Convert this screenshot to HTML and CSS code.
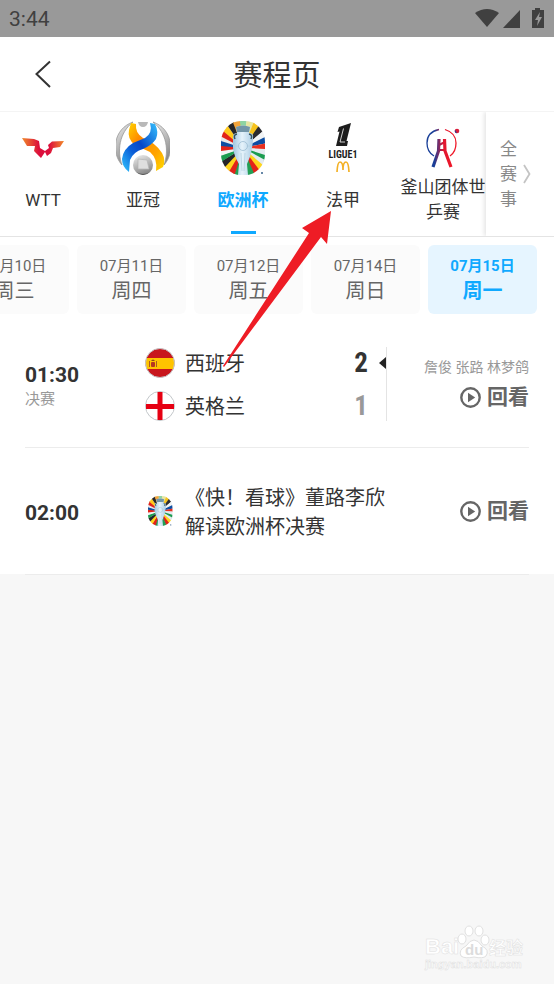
FILE: index.html
```
<!DOCTYPE html>
<html lang="zh-CN">
<head>
  <meta charset="UTF-8" />
  <meta name="viewport" content="width=device-width, initial-scale=1.0"/>
  <title>赛程页</title>
  <link rel="stylesheet" href="styles.css">
</head>
<body>

  <!-- Shared icons -->
  <svg class="sprite" aria-hidden="true">
    <defs>
      <path id="ray" d="M22 27L17.4 -8H26.6Z"/>
      <clipPath id="euroClip"><rect x="0" y="0" width="44" height="54" rx="20" ry="21"/></clipPath>
      <linearGradient id="cup" x1="0" x2="1">
        <stop offset="0" stop-color="#9fc6df"/>
        <stop offset="0.45" stop-color="#e6f3fb"/>
        <stop offset="1" stop-color="#a9cce4"/>
      </linearGradient>
    </defs>
    <symbol id="euro" viewBox="0 0 45 54">
      <g clip-path="url(#euroClip)">
        <rect width="44" height="54" fill="#e8edf0"/>
        <use href="#ray" fill="#8ed4a2"/>
        <use href="#ray" fill="#e8e6a0" transform="rotate(15 22 27)"/>
        <use href="#ray" fill="#f6c31c" transform="rotate(30 22 27)"/>
        <use href="#ray" fill="#2b2b2e" transform="rotate(43 22 27)"/>
        <use href="#ray" fill="#f1f3f4" transform="rotate(57 22 27)"/>
        <use href="#ray" fill="#0c4da2" transform="rotate(71 22 27)"/>
        <use href="#ray" fill="#e8301f" transform="rotate(86 22 27)"/>
        <use href="#ray" fill="#e4ebf0" transform="rotate(100 22 27)"/>
        <use href="#ray" fill="#1c9c50" transform="rotate(115 22 27)"/>
        <use href="#ray" fill="#e4ebf0" transform="rotate(126 22 27)"/>
        <use href="#ray" fill="#ffd51d" transform="rotate(138 22 27)"/>
        <use href="#ray" fill="#e2231a" transform="rotate(151 22 27)"/>
        <use href="#ray" fill="#229f55" transform="rotate(164 22 27)"/>
        <use href="#ray" fill="#229f55" transform="rotate(193 22 27)"/>
        <use href="#ray" fill="#e2231a" transform="rotate(205 22 27)"/>
        <use href="#ray" fill="#ffd51d" transform="rotate(218 22 27)"/>
        <use href="#ray" fill="#252528" transform="rotate(231 22 27)"/>
        <use href="#ray" fill="#1c9c50" transform="rotate(245 22 27)"/>
        <use href="#ray" fill="#f1f3f4" transform="rotate(258 22 27)"/>
        <use href="#ray" fill="#e2231a" transform="rotate(270 22 27)"/>
        <use href="#ray" fill="#0c4da2" transform="rotate(283 22 27)"/>
        <use href="#ray" fill="#e8e9ea" transform="rotate(295 22 27)"/>
        <use href="#ray" fill="#e2231a" transform="rotate(305 22 27)"/>
        <use href="#ray" fill="#ffc91c" transform="rotate(318 22 27)"/>
        <use href="#ray" fill="#252528" transform="rotate(333 22 27)"/>
        <use href="#ray" fill="#f3a43a" transform="rotate(346 22 27)"/>
      </g>
      <path d="M15 6Q22 3 29 6L28 12Q33 12 32 17Q32 22 31 27Q30 35 26 43L27 54H17L18 43Q13 35 12 27L12 16Q12 12 16 12Z" fill="url(#cup)"/>
      <path d="M15 6Q22 3 29 6L28 11H16Z" fill="#7396a8"/>
      <path d="M16 13Q12 14 14 18M28 13Q32 14 30 18" fill="none" stroke="#35535f" stroke-width="1.5"/>
      <circle cx="22" cy="25" r="4.5" fill="none" stroke="#9cbdd2" stroke-width="0.8"/>
      <path d="M12 25H17M27 25H31M20 32L21 50M24 32L23 50" stroke="#b5d0e0" stroke-width="0.8" fill="none"/>
      <circle cx="41" cy="52" r="1" fill="#35608b"/>
    </symbol>
    <symbol id="play" viewBox="0 0 21 21">
      <circle cx="10.5" cy="10.5" r="9.2" fill="none" stroke="#666" stroke-width="2.4"/>
      <path d="M8 5.8L15.2 10.5L8 15.2Z" fill="#666"/>
    </symbol>
  </svg>

  <div class="status-bar">
    <span class="clock">3:44</span>
    <svg class="status-icons" viewBox="0 0 70 22" aria-hidden="true">
      <path d="M0 5Q12 -3 24 5L12 19Z" fill="#404040"/>
      <path d="M28 20L45 2V20Z" fill="#404040"/>
      <path d="M57 2H60V0H65V2H69V20H57Z" fill="#404040"/>
      <path d="M65 4L60 12H63L62 18L67 9H64Z" fill="#999"/>
    </svg>
  </div>

  <header>
    <button class="back" aria-label="返回">
      <svg viewBox="0 0 16 28" aria-hidden="true"><path d="M15 1.500L1.500 14L15 27" fill="none" stroke="#333" stroke-width="2"/></svg>
    </button>
    <h1>赛程页</h1>
  </header>

  <nav class="leagues">
    <div class="league-list">
      <button class="league">
        <span class="logo">
          <svg width="42" height="20" viewBox="0 0 42 20" aria-hidden="true">
            <defs>
              <linearGradient id="wtt" x1="0" x2="1" y2="0">
                <stop offset="0" stop-color="#f08a2c"/>
                <stop offset="0.4" stop-color="#dc0f3c"/>
                <stop offset="0.65" stop-color="#dc0f3c"/>
                <stop offset="1" stop-color="#f28a2a"/>
              </linearGradient>
            </defs>
            <path d="M0 0L12 1L17 3L18 10L23 13L27 10L26 7L30 3.500L42 3L38 9L31 10L29 15L25 18L23 14L19 20L12 13L13 8L5 8Z" fill="url(#wtt)"/>
          </svg>
        </span>
        <span class="name">WTT</span>
      </button>

      <button class="league">
        <span class="logo">
          <svg width="54" height="54" viewBox="0 0 54 54" aria-hidden="true">
            <defs>
              <linearGradient id="silver" x1="0" y1="0" x2="0.4" y2="1">
                <stop offset="0" stop-color="#f1f1f1"/>
                <stop offset="1" stop-color="#8b8b8b"/>
              </linearGradient>
              <linearGradient id="blue" x1="1" y1="0" x2="0" y2="1">
                <stop offset="0" stop-color="#35c2ff"/>
                <stop offset="0.45" stop-color="#0647c8"/>
                <stop offset="0.65" stop-color="#0b5fd8"/>
                <stop offset="1" stop-color="#35c8ff"/>
              </linearGradient>
              <linearGradient id="gold" x1="0" y1="0" x2="1" y2="1">
                <stop offset="0" stop-color="#ffd500"/>
                <stop offset="0.3" stop-color="#ff8a00"/>
                <stop offset="0.7" stop-color="#ffa400"/>
                <stop offset="1" stop-color="#ffdc00"/>
              </linearGradient>
            </defs>
            <path d="M17 1C-3 8 -5 32 6 44C1 30 3 12 17 1Z" fill="url(#silver)" stroke="#999" stroke-width="0.8"/>
            <path d="M37 1C57 8 59 32 48 44C53 30 51 12 37 1Z" fill="url(#silver)" stroke="#999" stroke-width="0.8"/>
            <path d="M22 1H32Q31 6 27 6Q23 6 22 1Z" fill="#b9b9b9"/>
            <path d="M15 2L20 3Q19 12 27 17Q40 22 46 32Q50 39 47 46L40 50Q42 38 34 31L19 24Q11 18 13 9Z" fill="url(#gold)"/>
            <path d="M34 2L39 3Q43 11 40 18Q36 24 27 28Q17 31 14 39L13 51Q6 46 6 38Q7 28 17 22L29 17Q37 12 34 2Z" fill="url(#blue)"/>
            <circle cx="27" cy="44" r="10" fill="url(#silver)"/>
            <path d="M22 38L31 39L33 48L22 48Z" fill="#dedede" stroke="#b4b4b4" stroke-width="0.7"/>
            <path d="M20 51Q27 55 34 51Q27 57 20 51Z" fill="#555"/>
          </svg>
        </span>
        <span class="name">亚冠</span>
      </button>

      <button class="league active">
        <span class="logo"><svg width="45" height="54" aria-hidden="true"><use href="#euro"/></svg></span>
        <span class="name">欧洲杯</span>
      </button>

      <button class="league">
        <span class="logo">
          <svg width="30" height="50" viewBox="0 0 30 50" aria-hidden="true">
            <path d="M11 4L23 0L18.500 18H20L19 23H8L11.500 8.500L9.500 9Z" fill="#1d1d1d"/>
            <path d="M15.500 5.500L12 19H17" fill="none" stroke="#fff" stroke-width="0.8"/>
            <text class="ligue" x="15" y="35" text-anchor="middle">LIGUE1</text>
            <path d="M9 49Q9.500 39 12 39Q15 39 15 47Q15 39 18 39Q20.500 39 21 49" fill="none" stroke="#f3b126" stroke-width="1.700"/>
          </svg>
        </span>
        <span class="name">法甲</span>
      </button>

      <button class="league">
        <span class="logo">
          <svg width="34" height="40" viewBox="0 0 34 40" aria-hidden="true">
            <defs>
              <linearGradient id="busan" gradientUnits="userSpaceOnUse" x1="4" y1="0" x2="26" y2="0">
                <stop offset="0.2" stop-color="#193f98"/>
                <stop offset="0.6" stop-color="#df1731"/>
                <stop offset="1" stop-color="#ef1727"/>
              </linearGradient>
            </defs>
            <path d="M13 1.500Q1 4 1 15Q1 24 8 28M19 1.500Q30 5 30 15Q30 24 24 28" fill="none" stroke="url(#busan)" stroke-width="1.300"/>
            <path d="M13 11L12.500 23L7 39M18.500 11L19 23L25 39" fill="none" stroke="url(#busan)" stroke-width="3.200"/>
            <path d="M13 17L19 14M12 22H20" stroke="url(#busan)" stroke-width="2"/>
            <circle cx="31" cy="3" r="2.300" fill="#d91b3a"/>
            <path d="M29 2A2.300 2.300 0 0 0 31 5.300Z" fill="#1b3f98"/>
          </svg>
        </span>
        <span class="name">釜山团体世乒赛</span>
      </button>
    </div>

    <button class="all-events">
      <span class="all-text">全赛事</span>
      <svg width="8" height="20" viewBox="0 0 8 20" aria-hidden="true"><path d="M1 1L6.500 10L1 19" fill="none" stroke="#c4c4c4" stroke-width="1.800"/></svg>
    </button>
  </nav>

  <div class="days">
    <button class="day"><span class="date">07月10日</span><span class="week">周三</span></button>
    <button class="day"><span class="date">07月11日</span><span class="week">周四</span></button>
    <button class="day"><span class="date">07月12日</span><span class="week">周五</span></button>
    <button class="day"><span class="date">07月14日</span><span class="week">周日</span></button>
    <button class="day active"><span class="date">07月15日</span><span class="week">周一</span></button>
  </div>

  <main>
    <!-- Final -->
    <div class="match">
      <div class="when">
        <span class="time">01:30</span>
        <span class="stage">决赛</span>
      </div>
      <div class="teams">
        <div class="team">
          <svg class="flag" viewBox="0 0 30 30" aria-hidden="true">
            <clipPath id="round"><circle cx="15" cy="15" r="14.500"/></clipPath>
            <g clip-path="url(#round)">
              <rect width="30" height="30" fill="#c8161d"/>
              <rect y="10" width="30" height="11" fill="#ffc400"/>
              <rect x="4" y="13" width="1" height="6" fill="#ad5b20"/>
              <rect x="11" y="13" width="1" height="6" fill="#ad5b20"/>
              <rect x="6" y="14" width="4" height="5" rx="1" fill="#b53621"/>
              <path d="M6 13Q8 10 10 13Z" fill="#8d4a1d"/>
            </g>
            <circle cx="15" cy="15" r="14.500" fill="none" stroke="#c3c7ca"/>
          </svg>
          <span class="team-name">西班牙</span>
          <span class="score">2</span>
          <span class="winner"><svg width="7" height="12" viewBox="0 0 7 12" aria-hidden="true"><path d="M7 0V12L0 6Z" fill="#222"/></svg></span>
        </div>
        <div class="team">
          <svg class="flag" viewBox="0 0 30 30" aria-hidden="true">
            <circle cx="15" cy="15" r="14.500" fill="#fff" stroke="#c3c7ca"/>
            <path d="M15 1V29M1 15.500H29" stroke="#e60012" stroke-width="5"/>
          </svg>
          <span class="team-name">英格兰</span>
          <span class="score lost">1</span>
          <span class="winner"></span>
        </div>
      </div>
      <div class="divider"></div>
      <div class="watch with-hosts">
        <span class="hosts">詹俊 张路 林梦鸽</span>
        <button class="replay"><svg width="21" height="21" aria-hidden="true"><use href="#play"/></svg>回看</button>
      </div>
    </div>

    <!-- Talk show -->
    <div class="match">
      <div class="when"><span class="time">02:00</span></div>
      <div class="show">
        <span class="show-logo"><svg width="25" height="30" aria-hidden="true"><use href="#euro"/></svg></span>
        <span class="show-name">《快！看球》董路李欣解读欧洲杯决赛</span>
      </div>
      <div class="watch">
        <button class="replay"><svg width="21" height="21" aria-hidden="true"><use href="#play"/></svg>回看</button>
      </div>
    </div>
  </main>

  <svg class="pointer" viewBox="0 0 112 160" aria-hidden="true">
    <path d="M111 2L82 19L89 24L3 157L4 158L101 28L107 35Z" fill="#ee1c25"/>
  </svg>

  <svg class="watermark" viewBox="0 0 104 52" aria-hidden="true">
    <g fill="#fff" stroke="#e0e0e0">
      <text class="mark-latin" x="2" y="32">Bai</text>
      <path d="M51 18Q55 18 59 24Q67 28 63 34Q60 37 51 35Q42 37 38 34Q35 28 43 24Q47 18 51 18Z"/>
      <ellipse cx="39" cy="17" rx="4" ry="5"/>
      <ellipse cx="46" cy="9" rx="4" ry="5"/>
      <ellipse cx="56" cy="9" rx="4" ry="5"/>
      <ellipse cx="62" cy="18" rx="4" ry="5"/>
      <text class="mark-du" x="42" y="33">du</text>
      <text class="mark-cn" x="66" y="32">经验</text>
      <text class="mark-url" x="2" y="46">jingyan.baidu.com</text>
    </g>
  </svg>

</body>
</html>
```
FILE: styles.css
```
* {
  box-sizing: border-box;
}
body {
  position: relative;
  margin: 0;
  min-height: 100vh;
  font-family: Roboto, "Noto Sans CJK SC", sans-serif;
  background-color: #f7f7f7;
  color: #333;
}
button {
  font: inherit;
  color: inherit;
  background: none;
  border: none;
  padding: 0;
  cursor: pointer;
}
svg {
  display: block;
  flex: none;
}
.sprite {
  position: absolute;
  width: 0;
  height: 0;
}

.status-bar {
  display: flex;
  justify-content: space-between;
  align-items: center;
  height: 37px;
  padding: 0 9px;
  background-color: #999;
}
.clock {
  font-size: 21px;
  color: #404040;
}
.status-icons {
  width: 70px;
  height: 22px;
}

header {
  display: grid;
  grid-template-columns: 51px 1fr 51px;
  align-items: center;
  height: 75px;
  background: white;
  border-bottom: 1px solid #f4f4f4;
}
.back {
  display: flex;
  justify-content: flex-end;
}
.back svg {
  width: 16px;
  height: 28px;
}
h1 {
  margin: 0;
  padding-top: 3px;
  font-size: 29px;
  font-weight: 400;
  line-height: 40px;
  text-align: center;
}

.leagues {
  display: flex;
  height: 125px;
  background: white;
  border-bottom: 1px solid #e4e4e4;
}
.league-list {
  display: flex;
  flex: 1;
  min-width: 0;
  overflow: hidden;
}
.league {
  display: flex;
  flex: none;
  flex-direction: column;
  align-items: center;
  width: 100px;
  padding: 8px 7px 0;
}
.league:first-child {
  margin-left: -7px;
}
.logo {
  display: flex;
  align-items: center;
  justify-content: center;
  height: 55px;
}
.name {
  display: flex;
  align-items: center;
  height: 50px;
  font-size: 17px;
  line-height: 25px;
}
.league.active {
  color: #0fa9ff;
  font-weight: 700;
}
.league.active::after {
  content: "";
  width: 25px;
  height: 3px;
  margin-top: 6px;
  background: #0fa9ff;
}
.ligue {
  font-family: "Roboto Condensed", Roboto, sans-serif;
  font-size: 10px;
  font-weight: 700;
  fill: #1d1d1d;
}
.all-events {
  display: flex;
  align-items: center;
  gap: 6px;
  width: 68px;
  padding-left: 14px;
  color: #888;
  box-shadow: -2px 0 4px rgba(0,0,0,0.1);
  clip-path: inset(0 0 0 -8px);
}
.all-text {
  width: 17px;
  font-size: 17px;
  line-height: 25px;
}

.days {
  display: flex;
  justify-content: flex-end;
  gap: 8px;
  padding: 8px 17px 7px 0;
  background: white;
  overflow: hidden;
}
.day {
  display: flex;
  flex: none;
  flex-direction: column;
  align-items: center;
  width: 109px;
  height: 69px;
  padding-top: 9px;
  border-radius: 6px;
  background: #fbfbfb;
  color: #666;
}
.day.active {
  background: #e6f5ff;
  color: #0fa9ff;
  font-weight: 700;
}
.date {
  font-size: 15px;
  line-height: 24px;
}
.week {
  font-size: 20px;
  line-height: 26px;
}

main {
  padding: 0 25px;
  background: linear-gradient(white, white) top / 100% calc(100% - 1px) no-repeat;
}
.match {
  display: flex;
  align-items: center;
  min-height: 127px;
  border-bottom: 1px solid #ececec;
}
.when {
  display: flex;
  flex-direction: column;
  width: 120px;
  padding-top: 3px;
}
.time {
  font-size: 21px;
  font-weight: 700;
  line-height: 26px;
}
.stage {
  font-size: 15px;
  line-height: 22px;
  color: #999;
}
.teams {
  flex: 1;
}
.team {
  display: flex;
  align-items: center;
  height: 43px;
}
.flag {
  width: 30px;
  height: 30px;
  margin-right: 10px;
}
.team-name {
  flex: 1;
  font-size: 20px;
}
.score {
  width: 20px;
  font-family: "Roboto Condensed", Roboto, sans-serif;
  font-size: 27px;
  font-weight: 700;
  text-align: center;
}
.score.lost {
  color: #999;
}
.winner {
  display: flex;
  justify-content: flex-end;
  width: 15px;
}
.divider {
  width: 1px;
  height: 74px;
  background: #e4e4e4;
}
.watch {
  display: flex;
  flex-direction: column;
  align-items: flex-end;
  width: 142px;
}
.with-hosts {
  padding-bottom: 4px;
}
.hosts {
  font-size: 14px;
  line-height: 30px;
  color: #999;
  white-space: nowrap;
}
.replay {
  display: flex;
  align-items: center;
  gap: 6px;
  font-size: 21px;
  font-weight: 700;
  line-height: 30px;
  color: #666;
}
.show {
  display: flex;
  flex: 1;
  align-items: center;
}
.show-logo {
  display: flex;
  justify-content: center;
  width: 30px;
  margin-right: 10px;
}
.show-name {
  flex: 1;
  max-width: 202px;
  padding-top: 3px;
  font-size: 20px;
  line-height: 29px;
}

.pointer {
  position: absolute;
  left: 220px;
  top: 209px;
  width: 112px;
  height: 160px;
  pointer-events: none;
}
.watermark {
  position: absolute;
  right: 27px;
  bottom: 10px;
  width: 104px;
  height: 52px;
  font-family: "Liberation Sans", "Noto Sans CJK SC", sans-serif;
  font-weight: 700;
}
.watermark text {
  stroke-width: 0.5px;
}
.mark-latin {
  font-size: 22px;
}
.watermark .mark-du {
  font-size: 15px;
  fill: #dcdcdc;
  stroke: none;
}
.mark-cn {
  font-size: 17px;
}
.mark-url {
  font-size: 11px;
}
```
